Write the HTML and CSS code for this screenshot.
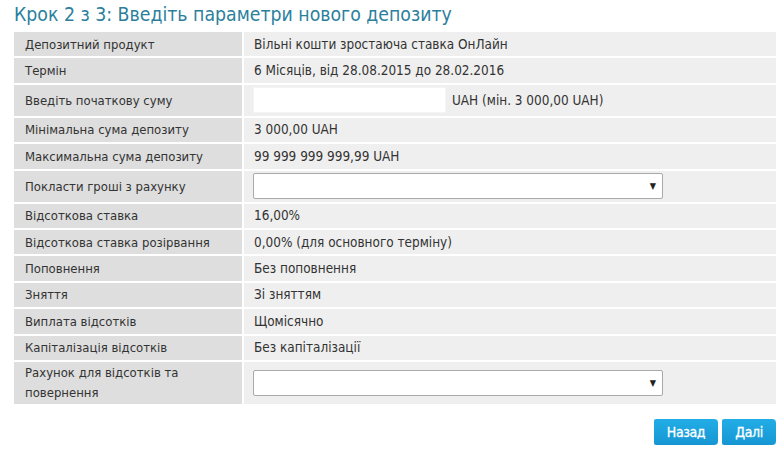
FILE: index.html
```html
<!DOCTYPE html>
<html lang="uk">
<head>
<meta charset="utf-8">
<title>Крок 2 з 3</title>
<link rel="stylesheet" href="styles.css">
</head>
<body>
<div class="page">
  <h1 class="title">Крок 2 з 3: Введіть параметри нового депозиту</h1>
  <div class="form">
    <div class="lbl">Депозитний продукт</div>
    <div class="val">Вільні кошти зростаюча ставка ОнЛайн</div>

    <div class="lbl">Термін</div>
    <div class="val">6 Місяців, від 28.08.2015 до 28.02.2016</div>

    <div class="lbl tall">Введіть початкову суму</div>
    <div class="val tall"><input class="amount" type="text"><span class="hint">UAH (мін. 3 000,00 UAH)</span></div>

    <div class="lbl">Мінімальна сума депозиту</div>
    <div class="val">3 000,00 UAH</div>

    <div class="lbl">Максимальна сума депозиту</div>
    <div class="val">99 999 999 999,99 UAH</div>

    <div class="lbl tall">Покласти гроші з рахунку</div>
    <div class="val tall"><div class="select"><span class="arrow">▼</span></div></div>

    <div class="lbl">Відсоткова ставка</div>
    <div class="val">16,00%</div>

    <div class="lbl">Відсоткова ставка розірвання</div>
    <div class="val">0,00% (для основного терміну)</div>

    <div class="lbl">Поповнення</div>
    <div class="val">Без поповнення</div>

    <div class="lbl">Зняття</div>
    <div class="val">Зі зняттям</div>

    <div class="lbl">Виплата відсотків</div>
    <div class="val">Щомісячно</div>

    <div class="lbl">Капіталізація відсотків</div>
    <div class="val">Без капіталізації</div>

    <div class="lbl double">Рахунок для відсотків та<br>повернення</div>
    <div class="val double"><div class="select"><span class="arrow">▼</span></div></div>
  </div>
  <div class="actions">
    <button class="btn btn-back" type="button">Назад</button>
    <button class="btn btn-next" type="button">Далі</button>
  </div>
</div>
</body>
</html>
```
FILE: styles.css
```css
html, body {
  margin: 0;
  padding: 0;
  background: #ffffff;
}
body {
  font-family: "DejaVu Sans Condensed", "DejaVu Sans", sans-serif;
  font-size: 13px;
  color: #333333;
}
.page {
  width: 762px;
  padding: 0 8px 0 14px;
}
.title {
  margin: 0;
  height: 32px;
  line-height: 32px;
  font-size: 19.3px;
  font-weight: normal;
  color: #2b7f9c;
  position: relative;
  top: -1px;
}
.form {
  display: grid;
  grid-template-columns: 228px 532px;
  gap: 2px;
  background: #ffffff;
}
.lbl, .val {
  height: 24.4px;
  display: flex;
  align-items: center;
  box-sizing: border-box;
}
.lbl {
  background: #dedede;
  padding-left: 11px;
}
.val {
  background: #efefef;
  padding-left: 10px;
  font-size: 13.45px;
}
.tall {
  height: 31px;
}
.double {
  height: 41.6px;
  line-height: 20px;
}
.amount {
  width: 193px;
  height: 26px;
  box-sizing: border-box;
  border: 1px solid #f4f4f4;
  background: #ffffff;
  margin: 0 0 0 -1px;
  padding: 0;
}
.hint {
  margin-left: 6px;
}
.select {
  margin-left: -1px;
  width: 410px;
  height: 26px;
  box-sizing: border-box;
  border: 1px solid #a9a9a9;
  border-radius: 2px;
  background: #ffffff;
  display: flex;
  align-items: center;
  justify-content: flex-end;
  padding-right: 6px;
}
.arrow {
  font-size: 9px;
  color: #222222;
}
.actions {
  display: flex;
  justify-content: flex-end;
  gap: 4px;
  margin-top: 15px;
  width: 762px;
}
.btn {
  height: 26px;
  border: none;
  border-radius: 2px 4px 4px 2px;
  background: linear-gradient(#22ade6, #1596d2);
  color: #ffffff;
  font-family: "DejaVu Sans Condensed", sans-serif;
  font-size: 14px;
  font-weight: normal;
  letter-spacing: -0.4px;
  -webkit-text-stroke: 0.3px #ffffff;
  padding: 0;
  margin: 0;
}
.btn-back {
  width: 64px;
}
.btn-next {
  width: 54px;
}
```
